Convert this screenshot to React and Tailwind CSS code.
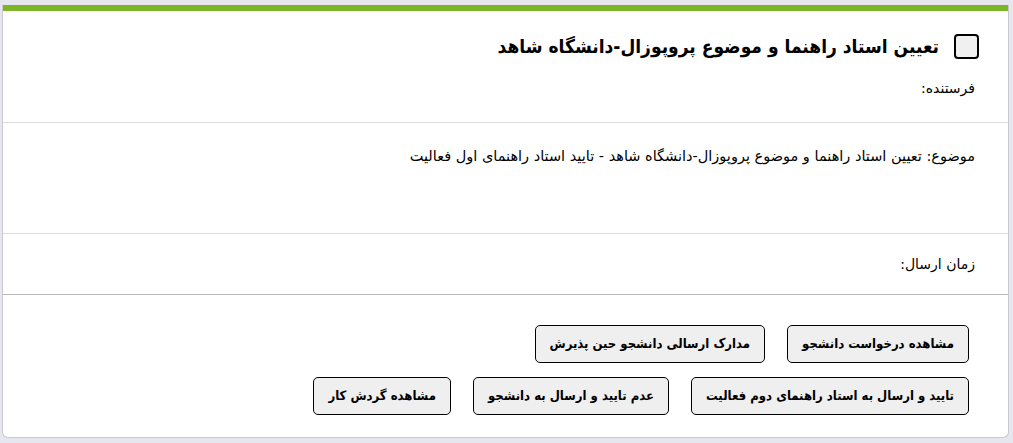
export default function App() {
  const row1 = ['مشاهده درخواست دانشجو', 'مدارک ارسالی دانشجو حین پذیرش']
  const row2 = ['تایید و ارسال به استاد راهنمای دوم فعالیت', 'عدم تایید و ارسال به دانشجو', 'مشاهده گردش کار']

  const btn = 'h-[38px] px-[14px] rounded-[5px] border border-black bg-[#efefef] text-[13px] font-bold text-black whitespace-nowrap'

  return (
    <div dir="rtl" className="min-h-screen bg-[#e6e6ee] pt-[5px] pl-[2px] pr-[4px] pb-[4px]" style={{ fontFamily: '"DejaVu Sans", sans-serif' }}>
      <div className="bg-white border border-[#c9c9cf] border-t-0 rounded-b-[6px] overflow-hidden">
        {/* Green top bar */}
        <div className="h-[6px] bg-[#7cb526]" />

        {/* Header */}
        <div className="pr-[29px] pt-[23px]">
          <div className="flex items-center gap-[15px]">
            <span className="w-[25px] h-[25px] rounded-[4px] border-2 border-black bg-[#f0f0f0] shrink-0" />
            <h1 className="text-[19px] font-bold text-black leading-none" style={{ fontFamily: '"DejaVu Sans Condensed", "DejaVu Sans", sans-serif' }}>تعیین استاد راهنما و موضوع پروپوزال-دانشگاه شاهد</h1>
          </div>
          <p className="mt-[19px] pr-[4px] text-[14px] text-black pb-[23px]">فرستنده:</p>
        </div>

        <div className="border-t border-[#dcdcdc]" />

        <div className="pr-[33px] pt-[23px] h-[110px] text-[14.5px] text-black">
          موضوع: تعیین استاد راهنما و موضوع پروپوزال-دانشگاه شاهد - تایید استاد راهنمای اول فعالیت
        </div>

        <div className="border-t border-[#dcdcdc]" />

        <div className="pr-[33px] pt-[20px] h-[60px] text-[14px] text-black">زمان ارسال:</div>

        <div className="border-t border-[#b9b9b9]" />

        {/* Actions */}
        <div className="pr-[39px] pt-[30px] pb-[22px] flex flex-col gap-[14px]" style={{ fontFamily: '"DejaVu Sans Condensed", "DejaVu Sans", sans-serif' }}>
          <div className="flex gap-[22px]">
            {row1.map(t => <button key={t} className={btn}>{t}</button>)}
          </div>
          <div className="flex gap-[22px]">
            {row2.map(t => <button key={t} className={btn}>{t}</button>)}
          </div>
        </div>
      </div>
    </div>
  )
}
